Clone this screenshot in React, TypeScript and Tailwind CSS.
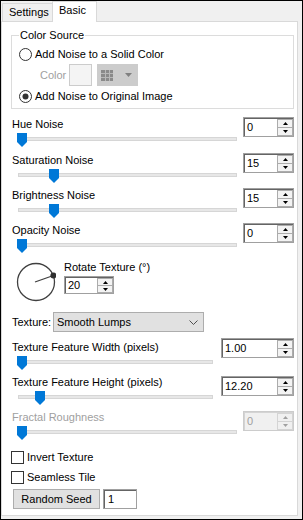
import React from "react";

const F = "font-['Liberation_Sans',Arial,sans-serif]";

function Radio({ checked }: { checked?: boolean }) {
  return (
    <svg width="13" height="13" viewBox="0 0 13 13" className="shrink-0">
      <circle cx="6.5" cy="6.5" r="6" fill="#fff" stroke="#333" strokeWidth="1" />
      {checked && <circle cx="6.5" cy="6.5" r="3" fill="#333" />}
    </svg>
  );
}

function Check() {
  return <div className="w-[13px] h-[13px] border border-[#333] bg-white shrink-0" />;
}

function Tri({ up, color }: { up?: boolean; color: string }) {
  return (
    <svg width="5" height="3" viewBox="0 0 5 3">
      {up ? <path d="M0 3L2.5 0L5 3Z" fill={color} /> : <path d="M0 0L5 0L2.5 3Z" fill={color} />}
    </svg>
  );
}

function NumBox({
  w,
  h,
  value,
  disabled,
}: {
  w: string;
  h: string;
  value: string;
  disabled?: boolean;
}) {
  const tc = disabled ? "#a0a0a0" : "#000";
  return (
    <div
      className={`flex ${w} ${h} border ${disabled ? "border-[#cccccc] bg-[#f0f0f0]" : "border-[#a0a0a0] bg-white"}`}
    >
      <div
        className={`flex flex-1 border-l border-t ${disabled ? "border-[#d4d4d4]" : "border-[#646464]"}`}
      >
        <div className={`flex-1 flex items-center pl-[2px] ${disabled ? "text-[#a0a0a0]" : "text-black"}`}>
          {value}
        </div>
        <div className="w-[16px] flex flex-col">
          <div
            className={`flex-1 flex items-center justify-center border ${disabled ? "border-[#d4d4d4] bg-[#f0f0f0]" : "border-[#acacac] bg-[#f3f3f3]"}`}
          >
            <Tri up color={tc} />
          </div>
          <div
            className={`flex-1 flex items-center justify-center border border-t-0 ${disabled ? "border-[#d4d4d4] bg-[#f0f0f0]" : "border-[#acacac] bg-[#f3f3f3]"}`}
          >
            <Tri color={tc} />
          </div>
        </div>
      </div>
    </div>
  );
}

function Slider({ trackW, thumb }: { trackW: string; thumb: string }) {
  return (
    <div className="relative mt-[2px] ml-[5px] h-[14px]">
      <div className={`ml-[1px] mt-[4px] h-[4px] border border-[#d6d6d6] bg-[#e7e7e7] ${trackW}`} />
      <svg className={`absolute top-0 ${thumb}`} width="10" height="14" viewBox="0 0 10 14">
        <path d="M0 0H10V9L5 14L0 9Z" fill="#0078d7" />
      </svg>
    </div>
  );
}

function SliderRow({
  mt,
  labelMt,
  label,
  disabled,
  trackW,
  thumb,
  box,
}: {
  mt: string;
  labelMt: string;
  label: string;
  disabled?: boolean;
  trackW: string;
  thumb: string;
  box: React.ReactNode;
}) {
  return (
    <div className={`flex justify-between ml-[10px] mr-[3px] ${mt}`}>
      <div className="flex flex-col">
        <div className={`${labelMt} ${disabled ? "text-[#a0a0a0]" : "text-black"}`}>{label}</div>
        <Slider trackW={trackW} thumb={thumb} />
      </div>
      {box}
    </div>
  );
}

export default function App() {
  return (
    <div
      className={`w-[303px] h-[520px] border border-black bg-[#f0f0f0] text-[11px] leading-[13px] text-black overflow-hidden ${F}`}
    >
      {/* Tabs */}
      <div className="flex items-end h-[20px] pl-[1px]">
        <div className="w-[50px] h-[18px] border-l border-t border-[#d9d9d9] pl-[6px] pt-[2px]">Settings</div>
        <div className="relative z-10 w-[45px] h-[21px] -mb-[1px] bg-white border-l border-t border-r border-[#d9d9d9] pl-[6px] pt-[2px]">
          Basic
        </div>
      </div>

      {/* Panel */}
      <div className="w-[297px] h-[495px] bg-white border border-[#d9d9d9]">
        {/* Color Source group */}
        <div className="relative mt-[13px] ml-[9px] w-[283px] h-[74px] border border-[#dcdcdc]">
          <div className="absolute left-[7px] -top-[7px] bg-white px-[1px]">Color Source</div>
          <div className="mt-[12px] ml-[7px] flex items-center h-[13px] gap-[3px]">
            <Radio />
            <span>Add Noise to a Solid Color</span>
          </div>
          <div className="mt-[3px] h-[22px] flex items-center pl-[28px]">
            <span className="w-[29px] text-[#a0a0a0]">Color</span>
            <div className="w-[23px] h-[22px] border border-[#cccccc] bg-[#f4f4f4]" />
            <div className="ml-[5px] w-[41px] h-[22px] bg-[#cccccc] flex items-center pl-[4px]">
              <svg width="12" height="11" viewBox="0 0 12 11">
                <rect x="0" y="0" width="12" height="11" fill="#8a8a8a" />
                <rect x="4" y="0" width="1" height="11" fill="#b8b8b8" />
                <rect x="8" y="0" width="1" height="11" fill="#b8b8b8" />
                <rect x="0" y="3" width="12" height="1" fill="#b8b8b8" />
                <rect x="0" y="7" width="12" height="1" fill="#b8b8b8" />
              </svg>
              <svg className="ml-[12px]" width="7" height="4" viewBox="0 0 7 4">
                <path d="M0 0L7 0L3.5 4Z" fill="#808080" />
              </svg>
            </div>
          </div>
          <div className="mt-[4px] ml-[7px] flex items-center h-[13px] gap-[3px]">
            <Radio checked />
            <span>Add Noise to Original Image</span>
          </div>
        </div>

        <SliderRow
          mt="mt-[8px]"
          labelMt="mt-[1px]"
          label="Hue Noise"
          trackW="w-[219px]"
          thumb="left-0"
          box={<NumBox w="w-[51px]" h="h-[20px]" value="0" />}
        />
        <SliderRow
          mt="mt-[6px]"
          labelMt="mt-[1px]"
          label="Saturation Noise"
          trackW="w-[219px]"
          thumb="left-[32px]"
          box={<NumBox w="w-[51px]" h="h-[20px]" value="15" />}
        />
        <SliderRow
          mt="mt-[5px]"
          labelMt="mt-[1px]"
          label="Brightness Noise"
          trackW="w-[219px]"
          thumb="left-[32px]"
          box={<NumBox w="w-[51px]" h="h-[20px]" value="15" />}
        />
        <SliderRow
          mt="mt-[5px]"
          labelMt="mt-[1px]"
          label="Opacity Noise"
          trackW="w-[219px]"
          thumb="left-0"
          box={<NumBox w="w-[51px]" h="h-[20px]" value="0" />}
        />

        {/* Rotate */}
        <div className="mt-[8px] flex">
          <svg className="mt-[1px] ml-[14px]" width="40" height="40" viewBox="0 0 40 40">
            <circle cx="20" cy="20" r="18.5" fill="none" stroke="#404040" strokeWidth="1.3" />
            <line x1="19" y1="20" x2="37.4" y2="13.5" stroke="#404040" strokeWidth="1.3" />
            <circle cx="37.4" cy="13.5" r="3" fill="#303030" />
          </svg>
          <div className="ml-[8px] flex flex-col">
            <div>Rotate Texture (°)</div>
            <div className="mt-[2px]">
              <NumBox w="w-[50px]" h="h-[18px]" value="20" />
            </div>
          </div>
        </div>

        {/* Texture */}
        <div className="mt-[10px] flex items-center h-[20px] ml-[10px]">
          <span className="w-[41px]">Texture:</span>
          <div className="w-[151px] h-[20px] bg-[#e1e1e1] border border-[#adadad] flex items-center justify-between pl-[3px] pr-[5px]">
            <span>Smooth Lumps</span>
            <svg width="9" height="5" viewBox="0 0 9 5">
              <path d="M0.5 0.5L4.5 4.5L8.5 0.5" fill="none" stroke="#505050" strokeWidth="1" />
            </svg>
          </div>
        </div>

        <SliderRow
          mt="mt-[6px]"
          labelMt="mt-[3px]"
          label="Texture Feature Width (pixels)"
          trackW="w-[195px]"
          thumb="left-0"
          box={<NumBox w="w-[73px]" h="h-[20px]" value="1.00" />}
        />
        <SliderRow
          mt="mt-[6px]"
          labelMt="mt-0"
          label="Texture Feature Height (pixels)"
          trackW="w-[195px]"
          thumb="left-[18px]"
          box={<NumBox w="w-[73px]" h="h-[20px]" value="12.20" />}
        />
        <SliderRow
          mt="mt-[6px]"
          labelMt="mt-0"
          label="Fractal Roughness"
          disabled
          trackW="w-[219px]"
          thumb="left-0"
          box={<NumBox w="w-[51px]" h="h-[20px]" value="0" disabled />}
        />

        <div className="mt-[11px] ml-[9px] flex items-center h-[13px] gap-[3px]">
          <Check />
          <span>Invert Texture</span>
        </div>
        <div className="mt-[7px] ml-[9px] flex items-center h-[13px] gap-[3px]">
          <Check />
          <span>Seamless Tile</span>
        </div>
        <div className="mt-[5px] ml-[11px] flex h-[20px]">
          <div className="w-[87px] h-[20px] bg-[#e1e1e1] border border-[#adadad] flex items-center justify-center">
            Random Seed
          </div>
          <div className="ml-[3px] w-[34px] h-[20px] border border-[#a0a0a0] bg-white">
            <div className="h-full border-l border-t border-[#646464] flex items-center pl-[3px]">1</div>
          </div>
        </div>
      </div>
    </div>
  );
}
